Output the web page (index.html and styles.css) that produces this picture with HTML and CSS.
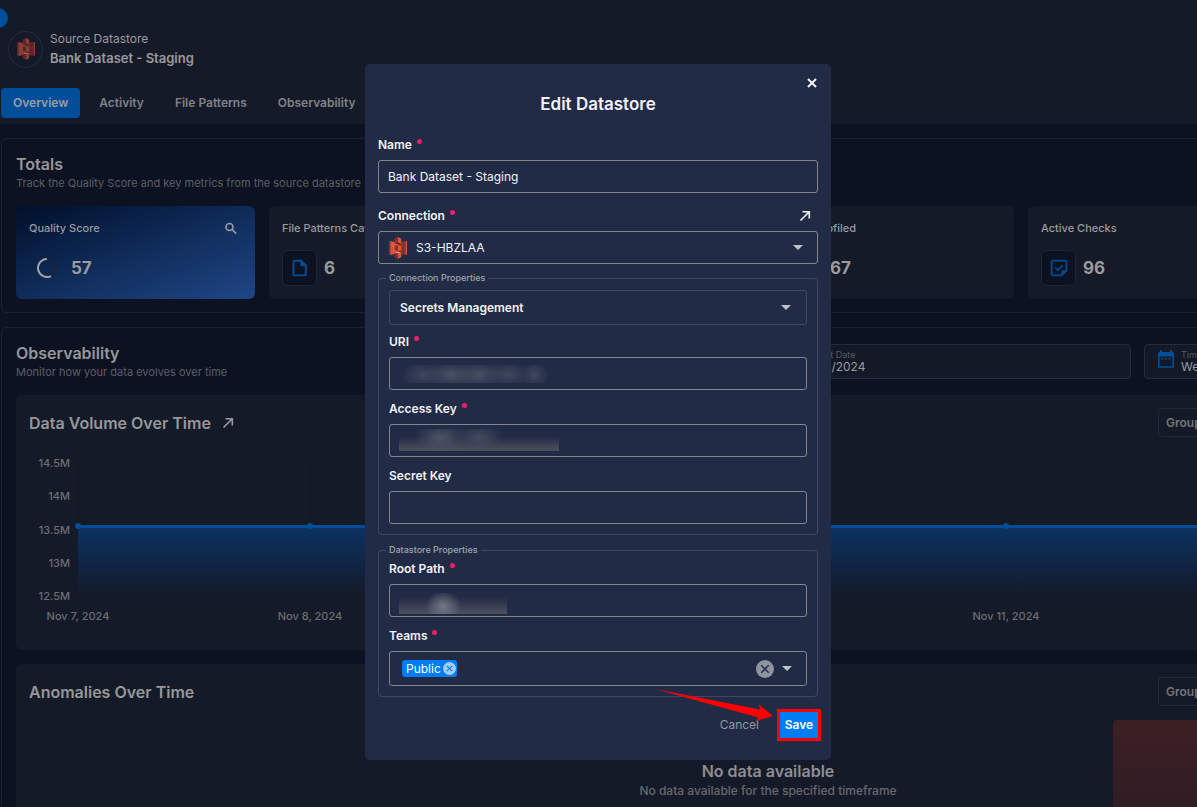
FILE: index.html
```html
<!DOCTYPE html>
<html lang="en">
<head>
<meta charset="utf-8">
<title>Edit Datastore</title>
<link rel="stylesheet" href="styles.css">
</head>
<body>
<svg class="defs" aria-hidden="true">
  <symbol id="s3" viewBox="0 0 256 310">
    <path fill="#8C3123" d="M20.624 53.686L0 64v181.02l20.624 10.254z"/>
    <path fill="#E05243" d="M131 229L20.624 255.274V53.686L131 79.387z"/>
    <path fill="#8C3123" d="M81.178 187.866l46.818 5.96.557-77.523-.557-.6-46.818 5.874z"/>
    <path fill="#8C3123" d="M127.996 229.295l107.371 26.035V53.686l-107.371 25.996z"/>
    <path fill="#E05243" d="M174.827 187.866l-46.831 5.96v-78.048l46.831 5.8z"/>
    <path fill="#5E1F18" d="M174.827 89.631l-46.831 8.535-46.818-8.535 46.759-12.256z"/>
    <path fill="#F2B0A9" d="M174.827 219.801l-46.831-8.59-46.818 8.59 46.761 13.053z"/>
    <path fill="#8C3123" d="M81.178 89.631l46.818-11.586V0L81.178 23.413z"/>
    <path fill="#E05243" d="M174.827 89.631l-46.831-11.586V0l46.831 23.413z"/>
    <path fill="#8C3123" d="M127.982 309.428l-46.823-23.405v-66.217l46.823 11.582z"/>
    <path fill="#E05243" d="M127.996 309.423l46.827-23.405v-66.217l-46.827 11.582z"/>
    <path fill="#E05243" d="M235.367 255.33L256 245.02V64l-20.633-10.314z"/>
  </symbol>
  <symbol id="arrow-out" viewBox="0 0 12 12">
    <path d="M1.5 10.5L10 2M3.500 1.800h6.800v6.800" fill="none" stroke="currentColor" stroke-width="1.600"/>
  </symbol>
  <symbol id="cross" viewBox="0 0 12 12">
    <path d="M2 2l8 8M10 2l-8 8" fill="none" stroke="currentColor" stroke-width="2"/>
  </symbol>
  <symbol id="file" viewBox="0 0 24 24">
    <path fill="currentColor" fill-rule="evenodd" d="M4 1h10l7 7v13a2 2 0 0 1-2 2H4a2 2 0 0 1-2-2V3a2 2 0 0 1 2-2zM4.500 3.500v17h14V9.500H12.500V3.500z"/>
  </symbol>
  <symbol id="note-check" viewBox="0 0 24 24">
    <path fill="currentColor" fill-rule="evenodd" d="M4 1h16a3 3 0 0 1 3 3v12l-7 7H4a3 3 0 0 1-3-3V4a3 3 0 0 1 3-3zM3.300 3.300v17.400H15V17a2 2 0 0 1 2-2h3.700V3.300z"/>
    <path d="M7 11.500l3.500 3.500 6.500-6.500" fill="none" stroke="currentColor" stroke-width="2.200"/>
  </symbol>
</svg>

<div class="page">
  <header class="top">
    <button class="drawer" aria-label="Toggle menu"></button>
    <div class="source">
      <span class="avatar"><svg class="s3 dim"><use href="#s3"/></svg></span>
      <div>
        <div class="kind">Source Datastore</div>
        <div class="store">Bank Dataset - Staging</div>
      </div>
    </div>
    <nav class="tabs">
      <a class="tab on" href="#overview">Overview</a>
      <a class="tab" href="#activity">Activity</a>
      <a class="tab" href="#patterns">File Patterns</a>
      <a class="tab" href="#observability">Observability</a>
    </nav>
  </header>

  <main class="main">
    <section class="panel">
      <h2>Totals</h2>
      <p class="sub">Track the Quality Score and key metrics from the source datastore</p>
      <div class="cards">
        <div class="card score">
          <div class="card-head"><span>Quality Score</span>
            <svg class="i12" viewBox="0 0 12 12"><g fill="none" stroke="#969a9f" stroke-width="1.700"><circle cx="4.500" cy="5" r="3.500"/><path d="M7 7.500l4.200 4.200"/></g></svg>
          </div>
          <div class="metric"><span class="ring"><svg viewBox="0 0 20 20"><circle cx="10" cy="10" r="9" fill="none" stroke="#1b2436" stroke-width="2"/><path d="M10 1a9 9 0 1 0 4 17.060" fill="none" stroke="#a2a4a6" stroke-width="2"/></svg></span><b>57</b></div>
        </div>
        <div class="card">
          <div class="card-head"><span>File Patterns Cataloged</span></div>
          <div class="metric"><span class="tile"><svg><use href="#file"/></svg></span><b>6</b></div>
        </div>
        <div class="card"></div>
        <div class="card">
          <div class="card-head"><span>Files Profiled</span></div>
          <div class="metric"><span class="tile"><svg><use href="#file"/></svg></span><b>67</b></div>
        </div>
        <div class="card">
          <div class="card-head"><span>Active Checks</span></div>
          <div class="metric"><span class="tile"><svg><use href="#note-check"/></svg></span><b>96</b></div>
        </div>
        <div class="card"></div>
      </div>
    </section>

    <section class="panel">
      <div class="row">
        <div class="grow">
          <h2>Observability</h2>
          <p class="sub">Monitor how your data evolves over time</p>
        </div>
        <div class="filters">
          <div class="filter"><span class="cal"></span><div><small>Report Date</small><span>11/13/2024</span></div></div>
          <div class="filter"><svg class="cal" viewBox="0 0 16 18"><path fill="#004d99" fill-rule="evenodd" d="M2 0h2v2h8V0h2v2h.5A1.500 1.500 0 0 1 16 3.500v12.800A1.500 1.500 0 0 1 14.500 17.800h-13A1.500 1.500 0 0 1 0 16.300V3.500A1.500 1.500 0 0 1 1.500 2H2zM1.600 6.400v9.800h12.800V6.400zM3.500 8h2v1.600h-2zM7 8h2v1.600H7zM10.500 8h2v1.600h-2z"/></svg><div><small>Timeframe</small><span>Weekly</span></div></div>
        </div>
      </div>

      <article class="box">
        <div class="box-head">
          <h3>Data Volume Over Time</h3>
          <svg class="i12"><use href="#arrow-out"/></svg>
          <button class="group">Group by</button>
        </div>
        <div class="chart">
          <div class="yaxis"><span>14.5M</span><span>14M</span><span>13.5M</span><span>13M</span><span>12.5M</span></div>
          <div class="plot">
            <div class="grid"><i></i><i></i><i></i><i></i><i></i><i></i><i></i></div>
            <div class="area"><i></i><i></i><i></i><i></i><i></i><i></i><i></i></div>
            <div class="xaxis"><span>Nov 7, 2024</span><span>Nov 8, 2024</span><span></span><span></span><span>Nov 11, 2024</span><span></span><span></span></div>
          </div>
        </div>
      </article>

      <article class="box last">
        <div class="box-head">
          <h3>Anomalies Over Time</h3>
          <button class="group">Group by</button>
        </div>
        <div class="anomalies">
          <div class="empty"><strong>No data available</strong><span>No data available for the specified timeframe</span></div>
          <div class="bar"></div>
        </div>
      </article>
    </section>
  </main>
</div>

<div class="overlay">
  <form class="modal" role="dialog" aria-labelledby="title">
    <button type="button" class="close" aria-label="Close"><svg class="i12"><use href="#cross"/></svg></button>
    <h1 id="title">Edit Datastore</h1>

    <div class="field">
      <label class="req" for="name">Name</label>
      <input id="name" class="ctl" value="Bank Dataset - Staging">
    </div>

    <div class="field">
      <div class="label-row"><label class="req" for="conn">Connection</label><a href="#connection" aria-label="Open connection"><svg class="i12"><use href="#arrow-out"/></svg></a></div>
      <div class="wrap">
        <select id="conn" class="ctl with-logo"><option>S3-HBZLAA</option></select>
        <svg class="s3 in-ctl"><use href="#s3"/></svg>
        <span class="caret"></span>
      </div>
    </div>

    <fieldset>
      <legend>Connection Properties</legend>
      <div class="wrap secrets">
        <button type="button" class="ctl faint">Secrets Management</button>
        <span class="caret"></span>
      </div>
      <div class="field">
        <label class="req" for="uri">URI</label>
        <div class="wrap"><input id="uri" class="ctl"><span class="mask mask-uri"></span></div>
      </div>
      <div class="field">
        <label class="req" for="access">Access Key</label>
        <div class="wrap"><input id="access" class="ctl"><span class="mask mask-key"></span></div>
      </div>
      <div class="field">
        <label for="secret">Secret Key</label>
        <input id="secret" class="ctl" type="password">
      </div>
    </fieldset>

    <fieldset>
      <legend>Datastore Properties</legend>
      <div class="field">
        <label class="req" for="root">Root Path</label>
        <div class="wrap"><input id="root" class="ctl"><span class="mask mask-root"></span></div>
      </div>
      <div class="field">
        <label class="req" for="teams">Teams</label>
        <div class="ctl combo">
          <span class="chip">Public<button type="button" aria-label="Remove Public"><svg viewBox="0 0 12 12"><path d="M3.500 3.500l5 5M8.500 3.500l-5 5" fill="none" stroke="#0a7df0" stroke-width="1"/></svg></button></span>
          <input id="teams" class="bare">
          <button type="button" class="clear" aria-label="Clear teams"><svg viewBox="0 0 12 12"><path d="M3.500 3.500l5 5M8.500 3.500l-5 5" fill="none" stroke="#222b46" stroke-width="1"/></svg></button>
          <span class="tri"></span>
        </div>
      </div>
    </fieldset>

    <footer class="actions">
      <button type="button" class="cancel">Cancel</button>
      <button class="save">Save</button>
      <svg class="pointer" viewBox="0 0 120 34" aria-hidden="true"><path fill="#ff0000" d="M0 0L105 20.500 104 15.500 118 27 101 32 103.500 28.500z"/></svg>
    </footer>
  </form>
</div>
</body>
</html>
```
FILE: styles.css
```css
* { box-sizing: border-box; }
html { background: #0c1222; overflow: hidden; }
body {
  margin: 0;
  height: 100vh;
  overflow: hidden;
  font-family: Inter, "Open Sans", sans-serif;
  font-size: 12px;
  line-height: 16px;
  color: #999a9d;
}
button, input, select { font: inherit; color: inherit; }
button { cursor: pointer; }
h1, h2, h3, p { margin: 0; }
a { color: inherit; text-decoration: none; }
svg { display: block; }
.defs { position: absolute; width: 0; height: 0; }
.i12 { width: 12px; height: 12px; }

.page { width: calc(100vw + 338px); }
.top { position: relative; background: #151a29; height: 124px; padding-top: 30px; }
.drawer {
  position: absolute; left: -12px; top: 8px;
  width: 20px; height: 20px; padding: 0;
  border: 0; border-radius: 50%; background: #004f9c;
}
.source { display: flex; align-items: center; gap: 7px; padding-left: 8px; }
.avatar {
  width: 35px; height: 37px;
  display: grid; place-items: center;
  border: 1px solid #252b3c; border-radius: 50%;
}
.s3 { width: 18px; height: 22px; }
.dim { opacity: .6; }
.kind { line-height: 18px; }
.store { font-size: 13px; font-weight: 600; line-height: 20px; }
.tabs { display: flex; gap: 7px; padding: 20px 0 0 1px; }
.tab {
  padding: 7px 12px;
  border-radius: 4px;
  font-weight: 600; font-size: 12px; line-height: 16px;
  color: #7f8288;
}
.tab.on { background: #004d99; color: #9a9da1; }

.main { display: grid; gap: 14px; padding: 14px 0 0 1px; }
.panel { border: 1px solid #1b2030; border-radius: 6px; padding: 14px 14px 13px; }
h2, h3 { font-size: 16px; font-weight: 600; line-height: 22px; color: #96979a; }
.sub { font-size: 11px; line-height: 17px; color: #5b5e65; }
.cards { display: grid; grid-template-columns: repeat(6, 1fr); gap: 14px; padding-top: 14px; }
.card { background: #151a29; border-radius: 6px; padding: 13px; height: 93px; }
.score { background: linear-gradient(160deg, #020f2a 0%, #0c2650 40%, #1f4686 100%); }
.card-head { display: flex; justify-content: space-between; align-items: center; padding-right: 5px; font-size: 11px; line-height: 18px; font-weight: 500; }
.metric { display: flex; align-items: center; gap: 7px; padding-top: 13px; }
.metric b { font-size: 17px; line-height: 24px; color: #9b9b9b; font-weight: 700; }
.tile, .ring { width: 35px; height: 36px; display: grid; place-items: center; }
.tile { border: 1px solid #1f2332; border-radius: 6px; background: #0c1222; color: #004d94; }
.tile svg { width: 18px; height: 18px; }
.ring svg { width: 20px; height: 20px; }

.row { display: flex; gap: 14px; }
.grow { flex: 1; }
.filters { display: flex; gap: 13px; padding: 2px 13px 0 0; }
.filter {
  display: flex; gap: 7px;
  width: 363px; height: 35px;
  padding: 5px 13px;
  border: 1px solid #252b38; border-radius: 4px;
  background: #131927;
}
.filter small { display: block; font-size: 9px; line-height: 10px; color: #555961; }
.filter span { display: block; line-height: 13px; font-size: 12px; }
.cal { width: 16px; height: 18px; }

.box { background: #151a29; border-radius: 6px; padding: 13px; margin-top: 14px; height: 255px; }
.box-head { display: flex; align-items: center; gap: 11px; }
.group {
  margin-left: auto;
  width: 94px; height: 29px; margin-right: 255px;
  padding: 0 7px; text-align: left;
  background: none; border: 1px solid #252a38; border-radius: 4px;
  font-weight: 600; color: #72757b;
}
.chart { display: flex; gap: 8px; padding: 18px 37px 0 0; font-size: 11px; color: #6b6d72; font-weight: 500; }
.yaxis { width: 41px; text-align: right; display: flex; flex-direction: column; justify-content: space-between; height: 149px; }
.plot { flex: 1; padding-top: 8px; }
.grid, .area, .xaxis { display: flex; justify-content: space-between; }
.grid { height: 62px; }
.grid i { width: 1px; background: #121725; }
.area { height: 71px; border-top: 3px solid #004d99; background: linear-gradient(#0a3262, #151a29); }
.area i { width: 6px; height: 6px; margin: -5px -3px 0; border-radius: 50%; background: #004d99; }
.xaxis { padding-top: 12px; white-space: nowrap; }
.xaxis span { width: 0; display: flex; justify-content: center; }
.last { height: 280px; }
.anomalies { position: relative; display: flex; justify-content: center; padding-top: 54px; }
.empty { display: grid; text-align: center; color: #66686d; font-size: 12px; font-weight: 500; line-height: 17px; }
.empty strong { font-size: 16px; font-weight: 600; line-height: 22px; color: #8d8e91; }
.bar {
  position: absolute; right: 255px; top: 14px;
  width: 139px; height: 180px;
  border-radius: 4px; background: linear-gradient(#3c1f23, #251b26);
}

.overlay { position: fixed; inset: 0; display: flex; justify-content: center; align-items: flex-start; padding: 64px 1px 0 0; }
.modal {
  position: relative;
  width: 466px;
  padding: 29px 13px 19px;
  border-radius: 5px;
  background: #222b46;
  color: #f1f2f4;
}
.close { position: absolute; right: 13px; top: 13px; padding: 0; border: 0; background: none; }
h1 { font-size: 17px; font-weight: 600; line-height: 22px; text-align: center; padding-bottom: 22px; box-sizing: content-box; }
.field { display: flex; flex-direction: column; gap: 7px; }
.modal > .field { margin-bottom: 15px; }
.modal > .field + .field { margin-bottom: 6px; }
label { font-weight: 600; line-height: 16px; align-self: flex-start; }
.req::after {
  content: ""; display: inline-block;
  width: 5px; height: 5px; margin-left: 5px;
  border-radius: 50%; background: #ee1f64;
  vertical-align: 5px;
}
.label-row { display: flex; justify-content: space-between; align-items: center; padding-right: 7px; height: 16px; }
.wrap { position: relative; }
.ctl {
  display: block; width: 100%; height: 33px;
  padding: 0 9px;
  border: 1px solid #85868a; border-radius: 3px;
  background: transparent; outline: none;
  text-align: left; appearance: none;
}
.with-logo { padding-left: 37px; }
.in-ctl { position: absolute; left: 11px; top: 6px; pointer-events: none; }
.caret, .tri {
  border: 5px solid transparent; border-bottom: 0; border-top-color: #bfc2c9;
  width: 0; height: 0;
}
.caret { position: absolute; right: 15px; top: 14px; pointer-events: none; }
fieldset { margin: 0 0 7px; padding: 4px 10px 10px; border: 1px solid #3f4861; border-radius: 4px; min-width: 0; }
legend { margin-left: -3px; padding: 0 3px; font-size: 9px; line-height: 16px; color: #a0a3ab; font-weight: 500; }
fieldset .field + .field { margin-top: 11px; }
fieldset .field:first-of-type { margin-top: -1px; }
.secrets { margin-bottom: 9px; }
.faint { height: 35px; border-color: #3f4861; font-weight: 600; padding: 0 10px; }
.faint + .caret { right: 16px; top: 15px; }
.mask { position: absolute; pointer-events: none; }
.mask-uri {
  left: 14px; top: 8px; width: 146px; height: 18px;
  background:
    radial-gradient(ellipse 22px 14px at 14% 55%, #3f475c, transparent),
    radial-gradient(ellipse 24px 15px at 33% 55%, #4a5264, transparent),
    radial-gradient(ellipse 24px 15px at 52% 55%, #485063, transparent),
    radial-gradient(ellipse 22px 14px at 72% 55%, #40485d, transparent),
    radial-gradient(ellipse 14px 14px at 90% 55%, #40485d, transparent);
}
.mask-key {
  left: 10px; top: 5px; width: 160px; height: 22px;
  background:
    radial-gradient(ellipse 26px 16px at 26% 40%, #4c5465, transparent),
    radial-gradient(ellipse 24px 15px at 50% 40%, #434b5f, transparent),
    linear-gradient(transparent 35%, #4d505e);
}
.mask-root {
  left: 10px; top: 9px; width: 108px; height: 21px;
  background:
    radial-gradient(ellipse 18px 16px at 41% 65%, #747987, transparent),
    linear-gradient(transparent 20%, #4d505e);
}
.combo { display: flex; align-items: center; height: 35px; padding: 0 14px 0 12px; }
.chip {
  display: flex; align-items: center; gap: 2px;
  height: 17px; padding: 0 1px 0 4px;
  border-radius: 3px; background: #007df5; color: #fff;
}
.chip button { width: 13px; height: 13px; padding: 0; border: 0; border-radius: 50%; background: #a3cdf7; }
.bare { flex: 1; min-width: 0; border: 0; background: none; outline: none; }
.clear { width: 18px; height: 18px; padding: 0; border: 0; border-radius: 50%; background: #8f94a1; margin-right: 8px; }
.actions { position: relative; display: flex; justify-content: flex-end; align-items: center; gap: 18px; padding-top: 5px; margin-right: -3px; }
.cancel { padding: 0; border: 0; background: none; color: #9296a1; }
.save { height: 32px; width: 44px; padding: 0; border: 3px solid #ff0000; background: #007df5; color: #fff; font-weight: 600; }
.pointer { position: absolute; right: 46px; top: -15px; width: 120px; height: 34px; pointer-events: none; }
```
